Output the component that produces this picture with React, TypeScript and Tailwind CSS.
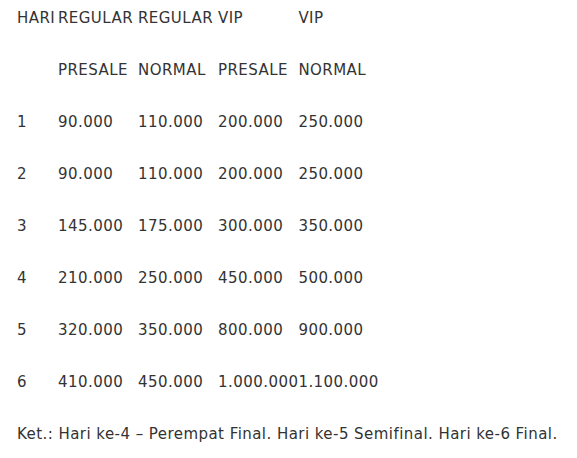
const rows = [
  ["1", "90.000", "110.000", "200.000", "250.000"],
  ["2", "90.000", "110.000", "200.000", "250.000"],
  ["3", "145.000", "175.000", "300.000", "350.000"],
  ["4", "210.000", "250.000", "450.000", "500.000"],
  ["5", "320.000", "350.000", "800.000", "900.000"],
  ["6", "410.000", "450.000", "1.000.000", "1.100.000"],
];

const App = () => {
  return (
    <div className="bg-white px-[17px] pt-[7px] text-[15px] leading-[22px] tracking-[0.45px] text-[#333333] font-['DejaVu_Sans',sans-serif]">
      <table className="border-collapse">
        <colgroup>
          <col className="w-[41px]" />
          <col className="w-[80px]" />
          <col className="w-[80px]" />
          <col className="w-[77px]" />
          <col className="w-[80px]" />
        </colgroup>
        <thead>
          <tr className="h-[52px] align-top">
            <th className="p-0 text-left font-normal whitespace-nowrap">HARI</th>
            <th className="p-0 text-left font-normal whitespace-nowrap">REGULAR</th>
            <th className="p-0 text-left font-normal whitespace-nowrap">REGULAR</th>
            <th className="p-0 text-left font-normal whitespace-nowrap">VIP</th>
            <th className="p-0 text-left font-normal whitespace-nowrap">VIP</th>
          </tr>
          <tr className="h-[52px] align-top">
            <th className="p-0 text-left font-normal"></th>
            <th className="p-0 text-left font-normal whitespace-nowrap">PRESALE</th>
            <th className="p-0 text-left font-normal whitespace-nowrap">NORMAL</th>
            <th className="p-0 text-left font-normal whitespace-nowrap">PRESALE</th>
            <th className="p-0 text-left font-normal whitespace-nowrap">NORMAL</th>
          </tr>
        </thead>
        <tbody>
          {rows.map((row) => (
            <tr key={row[0]} className="h-[52px] align-top">
              {row.map((cell, i) => (
                <td key={i} className="p-0 whitespace-nowrap">
                  {cell}
                </td>
              ))}
            </tr>
          ))}
        </tbody>
      </table>
      <p className="whitespace-nowrap">
        Ket.: Hari ke-4 – Perempat Final. Hari ke-5 Semifinal. Hari ke-6 Final.
      </p>
    </div>
  );
};

export default App;
